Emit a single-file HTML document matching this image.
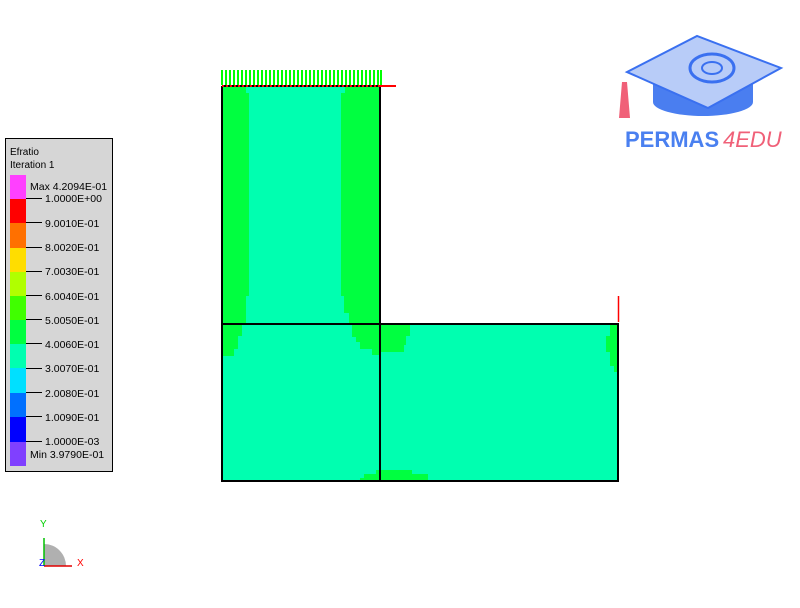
<!DOCTYPE html>
<html><head><meta charset="utf-8"><style>
body{margin:0;width:800px;height:608px;background:#fff;overflow:hidden;position:relative;font-family:"Liberation Sans",sans-serif}
</style></head><body>
<svg width="800" height="608" style="position:absolute;left:0;top:0" font-family="Liberation Sans, sans-serif">
<rect x="5.5" y="138.5" width="107" height="333" fill="#d6d6d6" stroke="#000"/>
<text x="10" y="155" font-size="10">Efratio</text>
<text x="10" y="168" font-size="10">Iteration 1</text>
<rect x="10" y="175" width="16" height="24" fill="#ff40ff"/>
<rect x="10" y="199" width="16" height="24" fill="#ff0000"/>
<rect x="10" y="223" width="16" height="25" fill="#ff7000"/>
<rect x="10" y="248" width="16" height="24" fill="#ffdd00"/>
<rect x="10" y="272" width="16" height="24" fill="#b0ff00"/>
<rect x="10" y="296" width="16" height="24" fill="#40ff00"/>
<rect x="10" y="320" width="16" height="24" fill="#00ff40"/>
<rect x="10" y="344" width="16" height="24" fill="#00ffb0"/>
<rect x="10" y="368" width="16" height="25" fill="#00e0ff"/>
<rect x="10" y="393" width="16" height="24" fill="#0070ff"/>
<rect x="10" y="417" width="16" height="25" fill="#0000ff"/>
<rect x="10" y="442" width="16" height="24" fill="#8040ff"/>
<g font-size="10.5">
<text x="30" y="190">Max 4.2094E-01</text>
<text x="45" y="202">1.0000E+00</text>
<text x="45" y="227">9.0010E-01</text>
<text x="45" y="251">8.0020E-01</text>
<text x="45" y="275">7.0030E-01</text>
<text x="45" y="300">6.0040E-01</text>
<text x="45" y="324">5.0050E-01</text>
<text x="45" y="348">4.0060E-01</text>
<text x="45" y="372">3.0070E-01</text>
<text x="45" y="397">2.0080E-01</text>
<text x="45" y="421">1.0090E-01</text>
<text x="45" y="445">1.0000E-03</text>
<text x="30" y="458">Min 3.9790E-01</text>
</g>
<g stroke="#000" stroke-width="1">
<line x1="26" y1="198.5" x2="42" y2="198.5"/><line x1="26" y1="222.5" x2="42" y2="222.5"/>
<line x1="26" y1="247.5" x2="42" y2="247.5"/><line x1="26" y1="271.5" x2="42" y2="271.5"/>
<line x1="26" y1="295.5" x2="42" y2="295.5"/><line x1="26" y1="319.5" x2="42" y2="319.5"/>
<line x1="26" y1="343.5" x2="42" y2="343.5"/><line x1="26" y1="368.5" x2="42" y2="368.5"/>
<line x1="26" y1="392.5" x2="42" y2="392.5"/><line x1="26" y1="416.5" x2="42" y2="416.5"/>
<line x1="26" y1="441.5" x2="42" y2="441.5"/>
</g>
<rect x="222" y="86" width="158" height="238" fill="#00ff40"/>
<polygon points="246,86 345,86 345,93 341,93 341,296 344,296 344,313 349,313 349,324 246,324 246,296 249,296 249,93 246,93" fill="#00ffb0"/>
<rect x="222" y="324" width="396" height="157" fill="#00ffb0"/>
<polygon points="222,324 242,324 242,336 238,336 238,349 234,349 234,356 222,356" fill="#00ff40"/>
<polygon points="352,324 410,324 410,336 406,336 406,345 404,345 404,352 380,352 380,355 372,355 372,349 360,349 360,342 356,342 356,337 352,337" fill="#00ff40"/>
<polygon points="610,324 618,324 618,372 614,372 614,366 610,366 610,352 606,352 606,336 610,336" fill="#00ff40"/>
<polygon points="360,481 360,478 364,478 364,474 376,474 376,470 412,470 412,474 428,474 428,481" fill="#00ff40"/>
<g stroke="#000" stroke-width="2" fill="none">
<polyline points="222,86 380,86 380,324 618,324 618,481 222,481 222,86"/>
<line x1="222" y1="324" x2="380" y2="324"/>
<line x1="380" y1="324" x2="380" y2="481"/>
</g>
<line x1="222" y1="86" x2="396" y2="86" stroke="#ff0000" stroke-width="2" stroke-dasharray="2,2"/>
<line x1="380" y1="86" x2="396" y2="86" stroke="#ff0000" stroke-width="2"/>
<g stroke="#00ff00" stroke-width="2">
<path d="M222 70V85M226 70V85M230 70V85M234 70V85M238 70V85M242 70V85M246 70V85M250 70V85M254 70V85M258 70V85M262 70V85M266 70V85M270 70V85M274 70V85M278 70V85M282 70V85M286 70V85M290 70V85M294 70V85M298 70V85M302 70V85M306 70V85M310 70V85M314 70V85M318 70V85M322 70V85M326 70V85M330 70V85M334 70V85M338 70V85M342 70V85M346 70V85M350 70V85M354 70V85M358 70V85M362 70V85M366 70V85M370 70V85M374 70V85M378 70V85M381 70V85"/>
</g>
<line x1="618.5" y1="296" x2="618.5" y2="322" stroke="#ff0000" stroke-width="1.5"/>
<path d="M44 566V544A22 22 0 0 1 66 566Z" fill="#b0b0b0"/>
<line x1="44" y1="566" x2="44" y2="538" stroke="#00c000" stroke-width="1.5"/>
<line x1="44" y1="566" x2="72" y2="566" stroke="#e00000" stroke-width="1.5"/>
<text x="40" y="527" font-size="10" fill="#00d000">Y</text>
<text x="77" y="566" font-size="10" fill="#ff0000">X</text>
<text x="39" y="566" font-size="10" fill="#0000ff">Z</text>
<path d="M622 82 L627 82 L630 118 L619 118 Z" fill="#f06078"/>
<ellipse cx="703" cy="102" rx="50" ry="14" fill="#4a7ef0"/>
<rect x="653" y="78" width="100" height="24" fill="#4a7ef0"/>
<polygon points="627,72 697,36 781,68 708,108" fill="#b8ccf8" stroke="#3a70f0" stroke-width="2"/>
<ellipse cx="712" cy="68" rx="22" ry="14" fill="none" stroke="#3a70f0" stroke-width="3"/>
<ellipse cx="712" cy="68" rx="10" ry="6" fill="none" stroke="#3a70f0" stroke-width="2"/>
<text x="625" y="147" font-size="22" font-weight="bold" fill="#4a80f0">PERMAS</text>
<text x="723" y="147" font-size="22" font-style="italic" fill="#f06078">4EDU</text>
</svg>
</body></html>
